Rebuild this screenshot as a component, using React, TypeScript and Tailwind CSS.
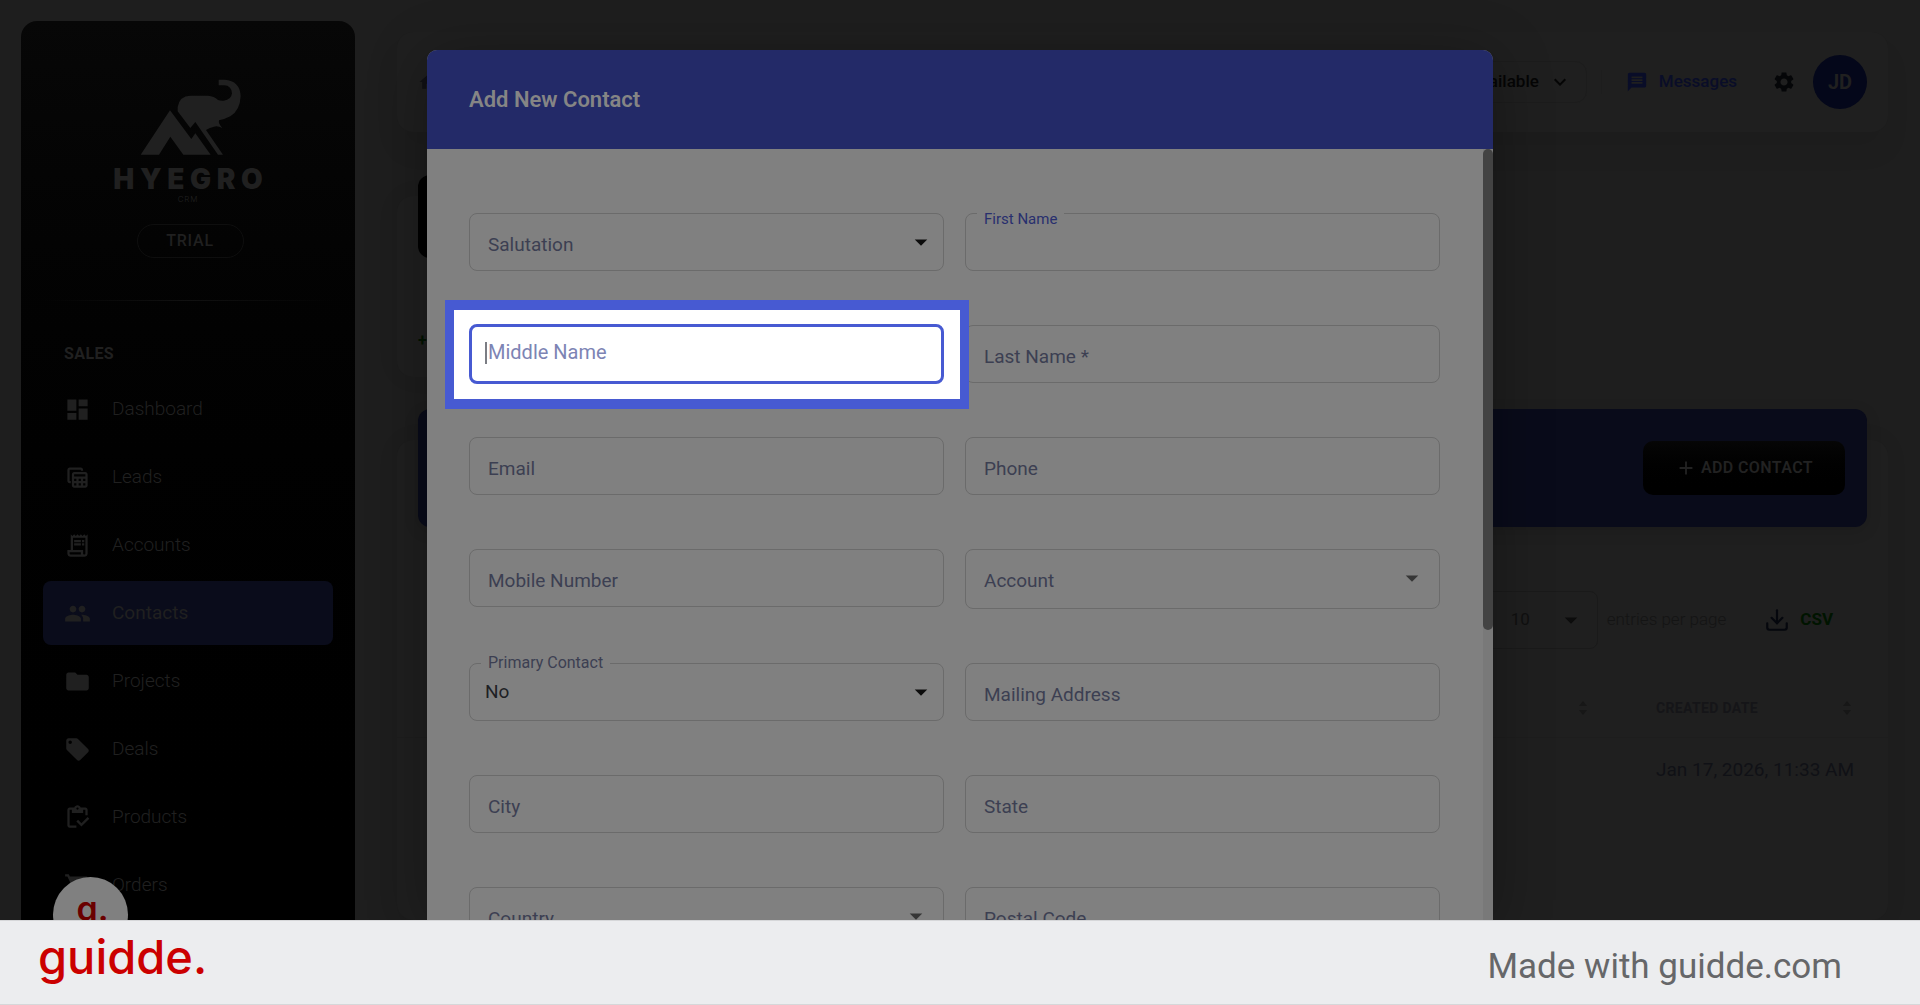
import { useState, type ReactNode } from "react";
import { Download } from "lucide-react";
import {
  MdAdd,
  MdArrowDropDown,
  MdDashboard,
  MdFolder,
  MdHome,
  MdKeyboardArrowDown,
  MdLocalOffer,
  MdMessage,
  MdOutlineInventory,
  MdOutlineReceiptLong,
  MdPeople,
  MdSettings,
  MdShoppingCart,
  MdTableView,
} from "react-icons/md";
import clsx from "clsx";

const navItems = [
  { label: "Dashboard", icon: MdDashboard },
  { label: "Leads", icon: MdTableView },
  { label: "Accounts", icon: MdOutlineReceiptLong },
  { label: "Contacts", icon: MdPeople, active: true },
  { label: "Projects", icon: MdFolder },
  { label: "Deals", icon: MdLocalOffer },
  { label: "Products", icon: MdOutlineInventory },
  { label: "Orders", icon: MdShoppingCart },
];

function HyegroLogo() {
  return (
    <div className="flex flex-col items-center text-[#202020]">
      <svg viewBox="412 238 318 228" className="ml-1 h-[76px] w-[106px]" fill="currentColor" aria-hidden="true">
        <path d="M423 465 511 332 575 418 587 401 633 465H551L512 411 478 465Z" />
        <path d="M534 335V322Q539 289 572 288H625Q643 289 655 301Q662 304 672 303Q695 301 697 281Q695 258 674 257H657V240H675Q721 243 723 290Q721 333 692 350Q677 358 658 362Q655 372 668 385Q654 378 643 381Q630 384 619 391L670 465H655L587 367 572 385Z" />
      </svg>
      <p className="mt-2 pl-[0.2em] font-[Inter] text-[28px] leading-8 font-black tracking-[0.2em]">HYEGRO</p>
      <p className="font-[Inter] text-[8px] leading-2 font-light tracking-widest">CRM</p>
    </div>
  );
}

function Sidebar() {
  return (
    <aside className="mt-[21px] ml-[21px] flex w-[334px] shrink-0 flex-col rounded-t-2xl bg-linear-to-b from-[#070707] to-black px-[22px] pt-[58px] text-[#202020]">
      <HyegroLogo />
      <div className="mt-[21px] flex justify-center pl-1">
        <span className="flex h-[34px] w-[107px] items-center justify-center rounded-full border border-[#0e0e0e] text-base font-medium tracking-wider">
          TRIAL
        </span>
      </div>
      <hr className="mt-[42px] h-px border-0 bg-linear-to-r from-transparent via-[#111111] to-transparent" />
      <h2 className="mt-[41px] ml-[21px] text-base leading-6 font-bold tracking-wide">SALES</h2>
      <nav className="mt-[11px] flex flex-col gap-1">
        {navItems.map(({ label, icon: Icon, active }) => (
          <a
            key={label}
            href="#"
            className={clsx(
              "flex h-16 items-center gap-[21px] rounded-lg px-[21px] text-[19px]",
              active ? "bg-[#0a0c1b] font-normal" : "font-light",
            )}
          >
            <Icon size={27} />
            {label}
          </a>
        ))}
      </nav>
    </aside>
  );
}

function TopBar() {
  return (
    <header className="flex h-[100px] items-center justify-between rounded-2xl bg-[#1f1f1f] px-[21px] shadow-[0_20px_27px_rgba(0,0,0,0.05)]">
      <MdHome size={20} className="text-[#101015]" />
      <div className="flex items-center">
        <button
          type="button"
          className="flex h-[42px] items-center gap-[9px] rounded-xl border border-[#1c1c1c] px-[14px] text-[17px] font-medium text-[#050505]"
        >
          Available
          <MdKeyboardArrowDown size={24} />
        </button>
        <span className="ml-[14px] h-6 w-px bg-[#1d1d1d]" />
        <a href="#" className="ml-6 flex items-center gap-[11px] text-[17px] font-medium text-[#090d28]">
          <MdMessage size={22} />
          Messages
        </a>
        <button type="button" aria-label="Settings" className="ml-[35px] text-[#050608]">
          <MdSettings size={24} />
        </button>
        <span className="ml-[17px] flex size-[54px] items-center justify-center rounded-full bg-[#04071a] text-xl font-bold text-[#202020]">
          JD
        </span>
      </div>
    </header>
  );
}

function SortIcon() {
  return (
    <svg viewBox="0 0 8 14" className="h-[14px] w-2" fill="#171717" aria-hidden="true">
      <path d="M4 0 8 5H0Z" />
      <path d="M4 14 0 9H8Z" />
    </svg>
  );
}

function ContactsCard() {
  return (
    <section className="mt-[63px] flex-1 rounded-2xl bg-[#1f1f1f] shadow-[0_0_24px_rgba(0,0,0,0.05)]">
      <div className="mx-[21px] flex h-[118px] -translate-y-[31px] items-center justify-end rounded-xl bg-[#090b1a] px-[22px] shadow-[0_4px_16px_rgba(0,0,0,0.12)]">
        <button
          type="button"
          className="flex h-[54px] w-[202px] items-center justify-center gap-1 rounded-[10px] bg-linear-to-b from-[#060606] to-black text-base font-semibold tracking-wide text-[#222222]"
        >
          <MdAdd size={22} />
          ADD CONTACT
        </button>
      </div>
      <div className="mt-[33px] flex items-center justify-end pr-[55px]">
        <div className="relative">
          <select
            id="page-size"
            defaultValue="10"
            className="h-[58px] w-[120px] appearance-none rounded-lg border border-[#1a1a1a] pl-8 text-[17px] text-[#101010]"
          >
            <option>10</option>
            <option>25</option>
          </select>
          <MdArrowDropDown size={30} className="pointer-events-none absolute top-[14px] right-3 text-[#0c0c0c]" />
        </div>
        <label htmlFor="page-size" className="ml-[9px] text-[17px] font-light text-[#141414]">
          entries per page
        </label>
        <button type="button" className="ml-[38px] flex items-center gap-[10px] text-[17px] font-bold text-[#001400]">
          <Download size={26} className="text-[#05070d]" />
          CSV
        </button>
      </div>
      <table className="mt-[31px] w-full table-fixed text-left">
        <thead>
          <tr className="border-b border-[#1d1d1d]">
            <th className="h-[57px] pr-[37px]">
              <div className="flex justify-end">
                <SortIcon />
              </div>
            </th>
            <th className="w-[264px] pr-[37px] pl-8 text-sm font-bold tracking-wide text-[#151518]">
              <div className="flex items-center justify-between">
                CREATED DATE
                <SortIcon />
              </div>
            </th>
          </tr>
        </thead>
        <tbody>
          <tr>
            <td />
            <td className="h-[65px] pl-8 text-[19px] whitespace-nowrap text-[#101116]">Jan 17, 2026, 11:33 AM</td>
          </tr>
        </tbody>
      </table>
    </section>
  );
}

function PageContent() {
  return (
    <main className="mt-8 mr-8 ml-[42px] flex min-w-0 flex-1 flex-col">
      <TopBar />
      <div className="mt-16 grid grid-cols-3 gap-8">
        <div className="flex h-[181px] flex-col justify-between rounded-2xl bg-[#1f1f1f] px-[21px] pb-6 shadow-[0_0_24px_rgba(0,0,0,0.05)]">
          <div className="size-[83px] -translate-y-[21px] rounded-xl bg-black" />
          <span className="text-base leading-6 font-bold text-[#001200]">+</span>
        </div>
      </div>
      <ContactsCard />
    </main>
  );
}

type FieldProps = {
  id: string;
  label: string;
  options?: string[];
  float?: "inside" | "border";
  tall?: boolean;
  mutedCaret?: boolean;
};

function Field({ id, label, options, float, tall, mutedCaret }: FieldProps) {
  const box = clsx(
    "w-full appearance-none rounded-lg border border-[#6b6b6b] px-[15px] text-[19px] text-[#1e1f24]",
    tall ? "h-[60px]" : "h-[58px]",
  );
  return (
    <div className="relative">
      {options ? (
        <select id={id} className={box}>
          {options.map((o) => (
            <option key={o}>{o}</option>
          ))}
        </select>
      ) : (
        <input id={id} type="text" className={box} />
      )}
      <label
        htmlFor={id}
        className={clsx(
          "absolute",
          !float && "top-5 left-[19px] text-[19px] leading-6 text-[#3c3f52]",
          float && "left-3 bg-[#808080] px-[7px] leading-4",
          float === "inside" && "-top-[2px] text-[15px] text-[#282f6e]",
          float === "border" && "-top-2 text-base text-[#3c3f52]",
        )}
      >
        {label}
      </label>
      {options && (
        <MdArrowDropDown
          size={30}
          className={clsx(
            "pointer-events-none absolute top-[14px]",
            mutedCaret ? "right-[13px] text-[#363636]" : "right-2 text-[#0c0c0c]",
          )}
        />
      )}
    </div>
  );
}

// Ring that lifts one field out of the dimmed form
function Spotlight({ children }: { children: ReactNode }) {
  return (
    <div className="relative z-10">
      <div className="absolute -top-[25px] -right-[25px] -bottom-[26px] -left-6 border-x-[9px] border-y-[10px] border-[#475ad2] bg-white" />
      <div className="relative">{children}</div>
    </div>
  );
}

function MiddleNameField() {
  const [value, setValue] = useState("");
  return (
    <Spotlight>
      <input
        id="middle-name"
        type="text"
        value={value}
        onChange={(e) => setValue(e.target.value)}
        className="-my-px h-[60px] w-full rounded-lg border-[3px] border-[#475ad2] bg-white px-[14px] text-xl text-[#222222] outline-none"
      />
      <span className="absolute top-[17px] left-4 h-[22px] w-[2px] bg-[#7b7d84]" />
      <label htmlFor="middle-name" className="absolute top-[15px] left-[19px] text-xl leading-6 text-[#7d84b4]">
        Middle Name
      </label>
    </Spotlight>
  );
}

function AddContactDialog() {
  return (
    <div className="absolute inset-0 flex justify-center pt-[50px]">
      <div
        role="dialog"
        aria-labelledby="dialog-title"
        className="flex w-[1066px] flex-col self-stretch rounded-t-[10px] bg-[#808080] shadow-[0_8px_60px_rgba(0,0,0,0.3)]"
      >
        <div className="flex h-[99px] shrink-0 items-center rounded-t-[10px] bg-[#232a68] px-[42px]">
          <h1 id="dialog-title" className="text-[22px] font-semibold text-[#858585]">
            Add New Contact
          </h1>
        </div>
        <div className="flex min-h-0 flex-1">
          <form className="grid flex-1 auto-rows-min grid-cols-2 gap-x-[21px] gap-y-[54px] pt-16 pr-[43px] pl-[42px]">
            <Field id="salutation" label="Salutation" options={["", "Mr.", "Ms."]} />
            <Field id="first-name" label="First Name" float="inside" />
            <MiddleNameField />
            <Field id="last-name" label="Last Name *" />
            <Field id="email" label="Email" />
            <Field id="phone" label="Phone" />
            <Field id="mobile" label="Mobile Number" />
            <Field id="account" label="Account" options={[""]} tall mutedCaret />
            <Field id="primary" label="Primary Contact" options={["No", "Yes"]} float="border" />
            <Field id="mailing" label="Mailing Address" />
            <Field id="city" label="City" />
            <Field id="state" label="State" />
            <Field id="country" label="Country" options={[""]} mutedCaret />
            <Field id="postal" label="Postal Code" />
          </form>
          <div className="w-[10px] bg-[#797979]">
            <div className="h-[481px] rounded-full bg-[#434343]" />
          </div>
        </div>
      </div>
    </div>
  );
}

export default function App() {
  return (
    <div className="flex h-screen flex-col bg-[#1e1e1e] font-[Roboto,sans-serif]">
      <div className="relative flex min-h-0 flex-1 overflow-hidden">
        <Sidebar />
        <PageContent />
        <AddContactDialog />
        <div className="absolute -bottom-[32px] left-[53px] flex size-[75px] items-start justify-center rounded-full bg-[#808080] pt-3 pl-1 font-[Inter] text-[34px] leading-10 font-semibold text-[#6a0000]">
          g.
        </div>
      </div>
      <footer className="relative flex h-[85px] shrink-0 items-center justify-between border-y border-[#d6d7d9] bg-[#ecedef] pr-[78px] pl-[38px]">
        <span className="pb-3 font-[Inter] text-[47px] leading-[56px] font-medium text-[#cb0000]">guidde.</span>
        <span className="pt-2 text-[35px] leading-10 text-[#666769]">Made with guidde.com</span>
      </footer>
    </div>
  );
}
